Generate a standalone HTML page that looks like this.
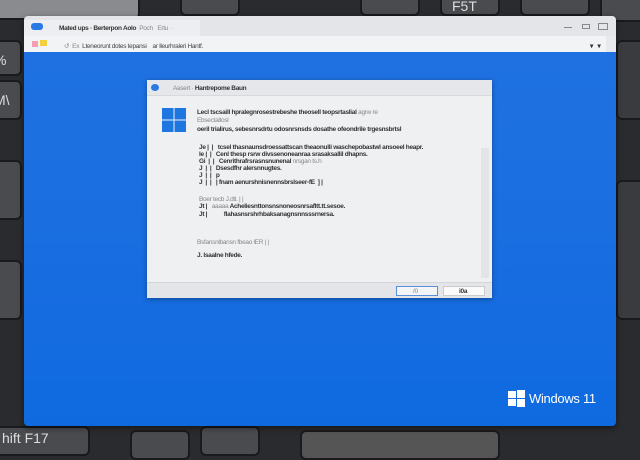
<!DOCTYPE html>
<html><head><style>
*{margin:0;padding:0;box-sizing:border-box}
body{width:640px;height:448px;overflow:hidden;background:#2a2b2e;font-family:"Liberation Sans",sans-serif;position:relative}
.key{position:absolute;background:#4a4b4f;border-radius:6px;border:2px solid #1a1a1c;color:#ddd;font-size:14px}
.abs{position:absolute}
.t{position:absolute;font-size:6.5px;color:#333;white-space:nowrap;font-weight:bold;letter-spacing:-0.3px}
.g{color:#888;font-weight:normal}
</style></head><body>
<div class="key" style="left:-10px;top:-10px;width:150px;height:30px;background:#8a8b8f"></div>
<div class="key" style="left:180px;top:-6px;width:60px;height:22px"></div>
<div class="key" style="left:360px;top:-6px;width:60px;height:22px"></div>
<div class="key" style="left:440px;top:-6px;width:60px;height:22px;padding:2px 10px">F5T</div>
<div class="key" style="left:520px;top:-6px;width:70px;height:22px"></div>
<div class="key" style="left:600px;top:-6px;width:60px;height:28px"></div>
<div class="key" style="left:-10px;top:40px;width:32px;height:36px;padding:10px 2px">%</div>
<div class="key" style="left:-10px;top:80px;width:32px;height:40px;padding:10px 2px">M\</div>
<div class="key" style="left:-10px;top:160px;width:32px;height:60px"></div>
<div class="key" style="left:-10px;top:260px;width:32px;height:60px"></div>
<div class="key" style="left:616px;top:40px;width:40px;height:80px;background:#3a3b3f"></div>
<div class="key" style="left:616px;top:180px;width:40px;height:140px;background:#3a3b3f"></div>
<div class="key" style="left:-10px;top:426px;width:100px;height:30px;padding:2px 10px">hift F17</div>
<div class="key" style="left:130px;top:430px;width:60px;height:30px"></div>
<div class="key" style="left:200px;top:426px;width:60px;height:30px"></div>
<div class="key" style="left:300px;top:430px;width:200px;height:30px;background:#555"></div>

<div class="abs" style="left:24px;top:16px;width:592px;height:410px;background:linear-gradient(180deg,#2072e2 0%,#1c6fe0 40%,#0f6ae0 100%);border-radius:4px;overflow:hidden;box-shadow:0 2px 6px rgba(0,0,0,.5)">
  <div class="abs" style="left:0;top:0;width:592px;height:20px;background:#e3e5e9"></div>
  <div class="abs" style="left:0;top:4px;width:176px;height:16px;background:#eceef1"></div>
  <div class="abs" style="left:7px;top:7px;width:12px;height:7px;background:#2a7ae6;border-radius:3px"></div>
  <div class="t" style="left:35px;top:9px">Mated ups · Berterpon Aolo &nbsp;<span class="g">Poch &nbsp; Ertu &nbsp;·</span></div>
  <div class="abs" style="left:540px;top:11px;width:8px;height:1px;background:#888"></div>
  <div class="abs" style="left:558px;top:8px;width:8px;height:5px;border:1px solid #888"></div>
  <div class="abs" style="left:574px;top:7px;width:10px;height:7px;border:1px solid #888"></div>
  <div class="abs" style="left:0;top:20px;width:592px;height:16px;background:#f2f3f5"></div>
  <div class="abs" style="left:8px;top:25px;width:6px;height:6px;background:#f0a0b0"></div>
  <div class="abs" style="left:16px;top:24px;width:7px;height:6px;background:#f3d13c"></div>
  <div class="t g" style="left:40px;top:26px">↺ &nbsp;Ex &nbsp;<span style="color:#444">Lteneorunt dotes tepansi &nbsp;&nbsp; ar lleurhraleri Hantf.</span></div>
  <div class="t" style="left:566px;top:26px">▾ &nbsp; ▾</div>
  <div class="abs" style="left:582px;top:20px;width:10px;height:16px;background:#e8e9ec"></div>

  <div class="abs" style="left:123px;top:64px;width:345px;height:218px;background:#eff0f2;box-shadow:0 1px 5px rgba(0,0,0,.35)">
    <div class="abs" style="left:0;top:0;width:345px;height:16px;background:#e6e7ea;border-bottom:1px solid #d8d9dc"></div>
    <div class="abs" style="left:4px;top:4px;width:8px;height:7px;background:#2a7ae6;border-radius:50%"></div>
    <div class="t" style="left:26px;top:5px"><span class="g">Aasert ·</span> Hantrepome Baun</div>
    <div class="abs" style="left:334px;top:68px;width:8px;height:130px;background:#e3e4e7"></div>
    <svg class="abs" style="left:15px;top:28px" width="24" height="24" viewBox="0 0 24 24"><g fill="#1e77e0"><rect x="0" y="0" width="11.5" height="11.5"/><rect x="12.5" y="0" width="11.5" height="11.5"/><rect x="0" y="12.5" width="11.5" height="11.5"/><rect x="12.5" y="12.5" width="11.5" height="11.5"/></g></svg>
    <div class="t" style="left:50px;top:29px">Lecl tscsaill hpralegnrosestrebeshe theosell teopsrtaslial <span class="g">agrw re</span></div>
    <div class="t g" style="left:50px;top:37px">Ebsectaltosl</div>
    <div class="t" style="left:50px;top:46px">oeril trialirus, sebesnrsdrtu odosnrsnsds dosathe ofeondrile trgesnsbrtsl</div>
    <div class="t" style="left:52px;top:64px">Je | &nbsp;| &nbsp;&nbsp;tcsel thasnaunsdroessattscan theaonulli waschepobastwl ansoeel heapr.</div>
    <div class="t" style="left:52px;top:71px">le | &nbsp;| &nbsp;&nbsp;Cenl thesp rsrw divssenoneanraa srasaksallil dhapns.</div>
    <div class="t" style="left:52px;top:78px">Gi &nbsp;| &nbsp;| &nbsp;&nbsp;Cenrithrafrsrasnsnunenal <span class="g">nrsgan ts.h</span></div>
    <div class="t" style="left:52px;top:85px">J &nbsp;| &nbsp;| &nbsp;&nbsp;Dsesdfhr alersnnugtes.</div>
    <div class="t" style="left:52px;top:92px">J &nbsp;| &nbsp;| &nbsp;&nbsp;p</div>
    <div class="t" style="left:52px;top:99px">J &nbsp;| &nbsp;| &nbsp;&nbsp;| fnam aenurshnisnennsbrslseer-fE &nbsp;] |</div>
    <div class="t g" style="left:52px;top:116px">Boer tecb J.dtl. | |</div>
    <div class="t" style="left:52px;top:123px">Jt | &nbsp;&nbsp;<span class="g">aaaaa</span> Acheliesnttonsnsnoneosnrsafltt.tt.sesoe.</div>
    <div class="t" style="left:52px;top:131px">Jt | &nbsp;&nbsp;&nbsp;&nbsp;&nbsp;&nbsp;&nbsp;&nbsp;&nbsp;&nbsp;flahasnsrshrhbaksanagnsnnsssrnersa.</div>
    <div class="t g" style="left:50px;top:159px">Bsfansnlbansn fbeao lER | |</div>
    <div class="t" style="left:50px;top:172px">J. lsaalne hfede.</div>
    <div class="abs" style="left:0;top:202px;width:345px;height:16px;background:#e4e5e8;border-top:1px solid #d4d5d8"></div>
    <div class="abs" style="left:249px;top:206px;width:42px;height:10px;background:#f3f4f6;border:1px solid #5b8fdc"></div>
    <div class="abs" style="left:296px;top:206px;width:42px;height:10px;background:#fafafa;border:1px solid #ccc"></div>
    <div class="t g" style="left:266px;top:208px">/0</div>
    <div class="t" style="left:312px;top:208px">i0a</div>
  </div>

  <svg class="abs" style="left:484px;top:374px" width="17" height="17" viewBox="0 0 17 17"><g fill="#fff"><rect x="0" y="1" width="8" height="7"/><rect x="9" y="0" width="8" height="8"/><rect x="0" y="9" width="8" height="7"/><rect x="9" y="9" width="8" height="8"/></g></svg>
  <div class="abs" style="left:505px;top:375px;color:#fff;font-size:13px;white-space:nowrap;letter-spacing:-0.3px">Windows 11</div>
</div>
</body></html>
